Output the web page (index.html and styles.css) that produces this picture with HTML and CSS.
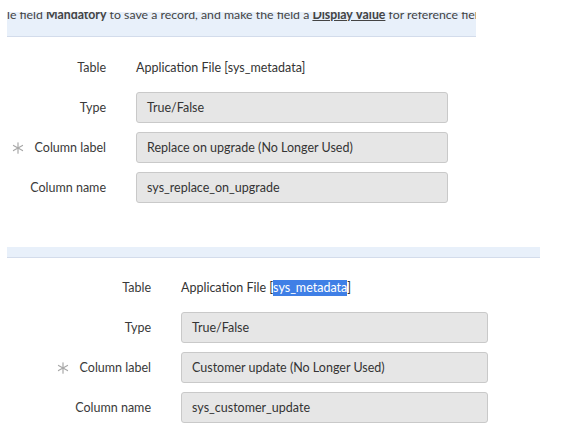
FILE: index.html
```
<!DOCTYPE html>
<html lang="en">
<head>
<meta charset="utf-8">
<title>Dictionary entry</title>
<link rel="stylesheet" href="styles.css">
</head>
<body>
<div class="banner banner-top">
  <p class="banner-text">le field <b>Mandatory</b> to save a record, and make the field a <b class="link">Display Value</b> for reference fields</p>
</div>

<section class="form form-a">
  <div class="label">Table</div>
  <div class="value plain">Application File [sys_metadata]</div>

  <div class="label">Type</div>
  <div class="value field">True/False</div>

  <div class="label"><svg class="req" viewBox="0 0 12 12" width="12" height="12"><g stroke="#a8a8a8" stroke-width="1.2" stroke-linecap="round"><line x1="6" y1="0.8" x2="6" y2="11.2"/><line x1="1.5" y1="3.4" x2="10.5" y2="8.6"/><line x1="1.5" y1="8.6" x2="10.5" y2="3.4"/></g></svg><span>Column label</span></div>
  <div class="value field">Replace on upgrade (No Longer Used)</div>

  <div class="label">Column name</div>
  <div class="value field">sys_replace_on_upgrade</div>
</section>

<div class="banner banner-mid"></div>

<section class="form form-b">
  <div class="label">Table</div>
  <div class="value plain">Application File [<span class="sel">sys_metadata</span>]</div>

  <div class="label">Type</div>
  <div class="value field">True/False</div>

  <div class="label"><svg class="req" viewBox="0 0 12 12" width="12" height="12"><g stroke="#a8a8a8" stroke-width="1.2" stroke-linecap="round"><line x1="6" y1="0.8" x2="6" y2="11.2"/><line x1="1.5" y1="3.4" x2="10.5" y2="8.6"/><line x1="1.5" y1="8.6" x2="10.5" y2="3.4"/></g></svg><span>Column label</span></div>
  <div class="value field">Customer update (No Longer Used)</div>

  <div class="label">Column name</div>
  <div class="value field">sys_customer_update</div>
</section>
</body>
</html>
```
FILE: styles.css
```
html, body {
  margin: 0;
  padding: 0;
  background: #ffffff;
}
body {
  font-family: Lato, "Liberation Sans", sans-serif;
  font-size: 12.5px;
  color: #343434;
}
.banner {
  background: #e8f0fa;
  border-bottom: 1px solid #d3dceb;
  margin-left: 7px;
  box-sizing: border-box;
}
.banner-top {
  margin-top: 12px;
  width: 469px;
  height: 25px;
  overflow: hidden;
}
.banner-text {
  margin: -5px 0 0 0;
  line-height: 16px;
  font-size: 12.3px;
  white-space: nowrap;
  color: #444444;
}
.banner-text b {
  font-weight: 700;
}
.banner-text .link {
  text-decoration: underline;
}
.banner-mid {
  margin-top: 44px;
  width: 533px;
  height: 11px;
}
.form {
  display: grid;
  column-gap: 30px;
  row-gap: 9px;
  grid-auto-rows: 31px;
}
.form-a {
  margin-top: 15px;
  grid-template-columns: 106px 312px;
}
.form-b {
  margin-top: 14px;
  grid-template-columns: 151px 307px;
}
.label {
  display: flex;
  align-items: center;
  justify-content: flex-end;
  gap: 11px;
  color: #3a3a3a;
  white-space: nowrap;
}
.req {
  display: block;
}
.value {
  display: flex;
  align-items: center;
  white-space: nowrap;
  color: #343434;
}
.field {
  background: #e6e6e6;
  border: 1px solid #c9c9c9;
  border-radius: 3px;
  padding-left: 10px;
  box-sizing: border-box;
}
.sel {
  background: #3f7fe6;
  color: #ffffff;
  line-height: 16px;
}
```
